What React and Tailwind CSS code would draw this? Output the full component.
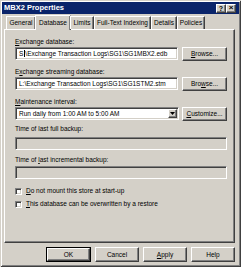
import React from "react";

const raised =
  "border border-t-white border-l-white border-r-[#404040] border-b-[#404040] shadow-[inset_-1px_-1px_0_#808080,inset_1px_1px_0_#d4d0c8]";
const sunken =
  "border border-t-[#808080] border-l-[#808080] border-r-white border-b-white shadow-[inset_1px_1px_0_#404040,inset_-1px_-1px_0_#d4d0c8]";

function Btn({ children, className = "" }) {
  return (
    <div className={`flex shrink-0 items-center justify-center bg-[#d4d0c8] ${raised} ${className}`}>
      {children}
    </div>
  );
}

function Field({ children, className = "", disabled = false }) {
  return (
    <div
      className={`flex items-center h-[13px] pl-[3px] whitespace-nowrap overflow-hidden ${
        disabled ? "bg-[#d4d0c8]" : "bg-white"
      } ${sunken} ${className}`}
    >
      {children}
    </div>
  );
}

function Label({ children, className = "" }) {
  return <div className={`h-[8px] leading-[8px] whitespace-nowrap ${className}`}>{children}</div>;
}

function Check({ children }) {
  return (
    <div className="flex items-center h-[8px]">
      <div className={`w-[7px] h-[7px] bg-white ${sunken}`} />
      <span className="ml-[4px] whitespace-nowrap">{children}</span>
    </div>
  );
}

const tabs = [
  { name: "General", w: "w-[30px]" },
  { name: "Database", w: "w-[36px]", active: true },
  { name: "Limits", w: "w-[24px]" },
  { name: "Full-Text Indexing", w: "w-[57px]" },
  { name: "Details", w: "w-[26px]" },
  { name: "Policies", w: "w-[28px]" },
];

export default function App() {
  return (
    <div className="w-[241px] h-[267px] bg-[#d4d0c8] p-[2px] flex flex-col text-black text-[6.5px] font-['Liberation_Sans',Arial,sans-serif] shadow-[inset_1px_1px_0_#d4d0c8,inset_-1px_-1px_0_#404040,inset_2px_2px_0_#fff,inset_-2px_-2px_0_#808080] overflow-hidden">
      {/* title bar */}
      <div className="h-[12px] bg-[#0a246a] flex items-center pl-[2px] pr-[3px]">
        <span className="text-white font-bold text-[7.5px] leading-none">MBX2 Properties</span>
        <div className="ml-auto flex">
          <Btn className="w-[10px] h-[9px] text-[7px] font-bold leading-none">?</Btn>
          <Btn className="w-[10px] h-[9px] text-[8px] font-bold leading-none">×</Btn>
        </div>
      </div>

      <div className="flex-1 flex flex-col pl-[2px] pr-[4px]">
        {/* tabs */}
        <div className="mt-[2px] h-[13px] flex items-end pl-[2px] relative z-10">
          {tabs.map((t) =>
            t.active ? (
              <div
                key={t.name}
                className={`${t.w} h-[15px] -mb-[1px] -mx-[1px] bg-[#d4d0c8] border-t border-l border-t-white border-l-white border-r border-r-[#404040] shadow-[inset_-1px_0_0_#808080] flex items-center justify-center whitespace-nowrap`}
              >
                {t.name}
              </div>
            ) : (
              <div
                key={t.name}
                className={`${t.w} h-[13px] border-t border-l border-t-white border-l-white border-r border-r-[#404040] shadow-[inset_-1px_0_0_#808080] flex items-center justify-center whitespace-nowrap`}
              >
                {t.name}
              </div>
            )
          )}
        </div>

        {/* panel */}
        <div className="h-[214px] border border-t-white border-l-white border-r-[#404040] border-b-[#404040] shadow-[inset_-1px_-1px_0_#808080] pl-[10px] pr-[7px] pt-[8px]">
          <Label>
            <u>E</u>xchange database:
          </Label>
          <div className="mt-[1px] h-[13px] flex items-start justify-between">
            <Field className="w-[163px]">
              S<span className="inline-block w-px h-[7px] bg-black mx-[0.5px]" />\Exchange Transaction Logs\SG1\SG1MBX2.edb
            </Field>
            <Btn className="w-[45px] h-[14px]">
              <u>B</u>rowse...
            </Btn>
          </div>

          <Label className="mt-[8px]">
            E<u>x</u>change streaming database:
          </Label>
          <div className="mt-[1px] h-[13px] flex items-start justify-between">
            <Field className="w-[163px]">L:\Exchange Transaction Logs\SG1\SG1STM2.stm</Field>
            <Btn className="w-[45px] h-[14px]">
              Bro<u>w</u>se...
            </Btn>
          </div>

          <Label className="mt-[8px]">
            <u>M</u>aintenance interval:
          </Label>
          <div className="mt-[1px] h-[13px] flex items-start justify-between">
            <Field className="w-[164px] pr-[1px]">
              Run daily from 1:00 AM to 5:00 AM
              <Btn className="ml-auto w-[9px] h-[9px]">
                <svg width="5" height="3" viewBox="0 0 5 3">
                  <path d="M0 0h5L2.5 3z" fill="#000" />
                </svg>
              </Btn>
            </Field>
            <Btn className="w-[45px] h-[14px]">
              <u>C</u>ustomize...
            </Btn>
          </div>

          <Label className="mt-[5px]">Time of last full backup:</Label>
          <Field disabled className="mt-[4px] w-full" />

          <Label className="mt-[6px]">
            Time of <u>l</u>ast incremental backup:
          </Label>
          <Field disabled className="mt-[2px] w-full" />

          <div className="mt-[8px] flex flex-col gap-[5px]">
            <Check>
              <u>D</u>o not mount this store at start-up
            </Check>
            <Check>
              <u>T</u>his database can be overwritten by a restore
            </Check>
          </div>
        </div>

        {/* buttons */}
        <div className="mt-[4px] flex justify-end gap-[4px]">
          <div className="border border-black">
            <Btn className="w-[43px] h-[13px]">OK</Btn>
          </div>
          <Btn className="w-[44px] h-[15px]">Cancel</Btn>
          <Btn className="w-[44px] h-[15px]">
            <u>A</u>pply
          </Btn>
          <Btn className="w-[44px] h-[15px]">Help</Btn>
        </div>
      </div>
    </div>
  );
}
